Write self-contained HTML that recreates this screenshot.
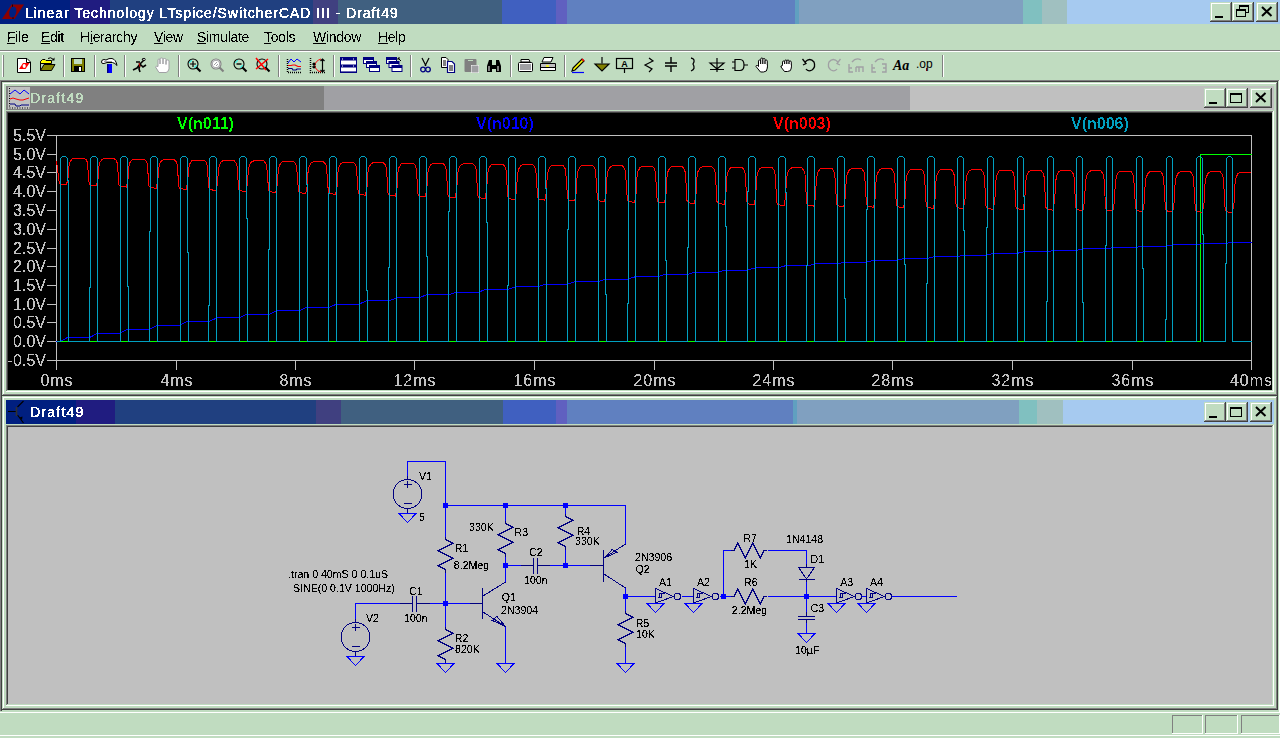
<!DOCTYPE html>
<html><head><meta charset="utf-8"><style>
html,body{margin:0;padding:0;width:1280px;height:738px;overflow:hidden;background:#C0DCC0;}
body>div,body>span,body>svg{position:absolute;}
span{font-family:"Liberation Sans",sans-serif;white-space:pre;line-height:1;filter:url(#crisp);}
svg text{font-family:"Liberation Sans",sans-serif;}
</style></head><body>
<svg width="0" height="0" style="position:absolute"><filter id="crisp" x="0" y="0" width="100%" height="100%"><feComponentTransfer><feFuncA type="discrete" tableValues="0 0 0 1 1 1 1"/></feComponentTransfer></filter><filter id="crispb" x="0" y="0" width="100%" height="100%"><feComponentTransfer><feFuncA type="discrete" tableValues="0 0 0 0 0 0 1 1 1 1"/></feComponentTransfer></filter><filter id="crispm" x="0" y="0" width="100%" height="100%"><feComponentTransfer><feFuncA type="discrete" tableValues="0 0 0 0 0 1 1 1 1 1"/></feComponentTransfer></filter></svg>
<div style="left:0px;top:0px;width:70px;height:24px;background:#001F80;"></div>
<div style="left:70px;top:0px;width:40px;height:24px;background:#201C80;"></div>
<div style="left:110px;top:0px;width:203px;height:24px;background:#204080;"></div>
<div style="left:313px;top:0px;width:25px;height:24px;background:#404080;"></div>
<div style="left:338px;top:0px;width:164px;height:24px;background:#406080;"></div>
<div style="left:502px;top:0px;width:54px;height:24px;background:#4060C0;"></div>
<div style="left:556px;top:0px;width:11px;height:24px;background:#6060C0;"></div>
<div style="left:567px;top:0px;width:228px;height:24px;background:#6080C0;"></div>
<div style="left:795px;top:0px;width:4px;height:24px;background:#60A0C0;"></div>
<div style="left:799px;top:0px;width:224px;height:24px;background:#80A0C0;"></div>
<div style="left:1023px;top:0px;width:19px;height:24px;background:#80C0C0;"></div>
<div style="left:1042px;top:0px;width:25px;height:24px;background:#A0C0C0;"></div>
<div style="left:1067px;top:0px;width:213px;height:24px;background:#A6CAF0;"></div>
<svg style="left:0;top:0" width="26" height="24" viewBox="0 0 26 24"><path fill="#8C0000" fill-rule="evenodd" d="M2,19 L11.5,4.5 H24 L14.5,19 Z M13,6.5 C15.5,6.5 16.8,8.5 16.4,11 C16,14 14.5,17.5 12.5,17.5 C10,17.5 8.8,15.5 9.2,13 C9.6,10 11,6.5 13,6.5 Z"/><path d="M12.5,4.5 V6.8 M13,17.2 V19" stroke="#200000" stroke-width="1"/></svg>
<span style="left:25px;top:6px;font-size:14px;color:#fff;font-weight:400;letter-spacing:0.96px;-webkit-text-stroke:0.3px #fff;filter:url(#crispm)">Linear Technology LTspice/SwitcherCAD III - Draft49</span>
<div style="left:1210px;top:2px;width:22px;height:20px;background:#C0DCC0;"></div>
<div style="left:1210px;top:2px;width:22px;height:1px;background:#C0DCC0;"></div>
<div style="left:1210px;top:2px;width:1px;height:20px;background:#C0DCC0;"></div>
<div style="left:1211px;top:3px;width:20px;height:1px;background:#FFFFFF;"></div>
<div style="left:1211px;top:3px;width:1px;height:18px;background:#FFFFFF;"></div>
<div style="left:1210px;top:21px;width:22px;height:1px;background:#404040;"></div>
<div style="left:1231px;top:2px;width:1px;height:20px;background:#404040;"></div>
<div style="left:1211px;top:20px;width:20px;height:1px;background:#808080;"></div>
<div style="left:1230px;top:3px;width:1px;height:18px;background:#808080;"></div>
<div style="left:1215px;top:16px;width:8px;height:2px;background:#000;"></div>
<div style="left:1232px;top:2px;width:22px;height:20px;background:#C0DCC0;"></div>
<div style="left:1232px;top:2px;width:22px;height:1px;background:#C0DCC0;"></div>
<div style="left:1232px;top:2px;width:1px;height:20px;background:#C0DCC0;"></div>
<div style="left:1233px;top:3px;width:20px;height:1px;background:#FFFFFF;"></div>
<div style="left:1233px;top:3px;width:1px;height:18px;background:#FFFFFF;"></div>
<div style="left:1232px;top:21px;width:22px;height:1px;background:#404040;"></div>
<div style="left:1253px;top:2px;width:1px;height:20px;background:#404040;"></div>
<div style="left:1233px;top:20px;width:20px;height:1px;background:#808080;"></div>
<div style="left:1252px;top:3px;width:1px;height:18px;background:#808080;"></div>
<div style="left:1239px;top:5px;width:10px;height:8px;background:transparent;box-sizing:border-box;border:1px solid #000;border-top-width:2px"></div>
<div style="left:1236px;top:9px;width:10px;height:8px;background:#C0DCC0;box-sizing:border-box;border:1px solid #000;border-top-width:2px"></div>
<div style="left:1256px;top:2px;width:22px;height:20px;background:#C0DCC0;"></div>
<div style="left:1256px;top:2px;width:22px;height:1px;background:#C0DCC0;"></div>
<div style="left:1256px;top:2px;width:1px;height:20px;background:#C0DCC0;"></div>
<div style="left:1257px;top:3px;width:20px;height:1px;background:#FFFFFF;"></div>
<div style="left:1257px;top:3px;width:1px;height:18px;background:#FFFFFF;"></div>
<div style="left:1256px;top:21px;width:22px;height:1px;background:#404040;"></div>
<div style="left:1277px;top:2px;width:1px;height:20px;background:#404040;"></div>
<div style="left:1257px;top:20px;width:20px;height:1px;background:#808080;"></div>
<div style="left:1276px;top:3px;width:1px;height:18px;background:#808080;"></div>
<svg style="left:1261px;top:6px" width="12" height="11" viewBox="0 0 12 11"><path d="M1,1 L10.5,10 M10.5,1 L1,10" stroke="#000" stroke-width="2"/></svg>
<span style="left:7px;top:30px;font-size:14px;color:#000;font-weight:400;letter-spacing:-0.3px;filter:url(#crispm)"><u>F</u>ile</span>
<span style="left:41px;top:30px;font-size:14px;color:#000;font-weight:400;letter-spacing:-0.3px;filter:url(#crispm)"><u>E</u>dit</span>
<span style="left:80px;top:30px;font-size:14px;color:#000;font-weight:400;letter-spacing:-0.3px;filter:url(#crispm)">H<u>i</u>erarchy</span>
<span style="left:154px;top:30px;font-size:14px;color:#000;font-weight:400;letter-spacing:-0.3px;filter:url(#crispm)"><u>V</u>iew</span>
<span style="left:197px;top:30px;font-size:14px;color:#000;font-weight:400;letter-spacing:-0.3px;filter:url(#crispm)"><u>S</u>imulate</span>
<span style="left:264px;top:30px;font-size:14px;color:#000;font-weight:400;letter-spacing:-0.3px;filter:url(#crispm)"><u>T</u>ools</span>
<span style="left:313px;top:30px;font-size:14px;color:#000;font-weight:400;letter-spacing:-0.3px;filter:url(#crispm)"><u>W</u>indow</span>
<span style="left:378px;top:30px;font-size:14px;color:#000;font-weight:400;letter-spacing:-0.3px;filter:url(#crispm)"><u>H</u>elp</span>
<div style="left:0px;top:50px;width:1280px;height:1px;background:#808080;"></div>
<div style="left:0px;top:51px;width:1280px;height:1px;background:#FFFFFF;"></div>
<div style="left:2px;top:55px;width:1px;height:22px;background:#FFFFFF;"></div>
<div style="left:3px;top:55px;width:1px;height:22px;background:#808080;"></div>
<div style="left:63px;top:55px;width:1px;height:22px;background:#808080;"></div>
<div style="left:64px;top:55px;width:1px;height:22px;background:#FFFFFF;"></div>
<div style="left:94px;top:55px;width:1px;height:22px;background:#808080;"></div>
<div style="left:95px;top:55px;width:1px;height:22px;background:#FFFFFF;"></div>
<div style="left:124px;top:55px;width:1px;height:22px;background:#808080;"></div>
<div style="left:125px;top:55px;width:1px;height:22px;background:#FFFFFF;"></div>
<div style="left:178px;top:55px;width:1px;height:22px;background:#808080;"></div>
<div style="left:179px;top:55px;width:1px;height:22px;background:#FFFFFF;"></div>
<div style="left:278px;top:55px;width:1px;height:22px;background:#808080;"></div>
<div style="left:279px;top:55px;width:1px;height:22px;background:#FFFFFF;"></div>
<div style="left:333px;top:55px;width:1px;height:22px;background:#808080;"></div>
<div style="left:334px;top:55px;width:1px;height:22px;background:#FFFFFF;"></div>
<div style="left:410px;top:55px;width:1px;height:22px;background:#808080;"></div>
<div style="left:411px;top:55px;width:1px;height:22px;background:#FFFFFF;"></div>
<div style="left:510px;top:55px;width:1px;height:22px;background:#808080;"></div>
<div style="left:511px;top:55px;width:1px;height:22px;background:#FFFFFF;"></div>
<div style="left:564px;top:55px;width:1px;height:22px;background:#808080;"></div>
<div style="left:565px;top:55px;width:1px;height:22px;background:#FFFFFF;"></div>
<div style="left:942px;top:55px;width:1px;height:22px;background:#808080;"></div>
<div style="left:943px;top:55px;width:1px;height:22px;background:#FFFFFF;"></div>
<svg style="left:0;top:52px" width="950" height="28" viewBox="0 52 950 28">
<g transform="translate(17,58)"><path d="M0.5,0.5 H10 L13.5,4 V14.5 H0.5 Z" fill="#fff" stroke="#000"/><path d="M9.5,0.5 V4.5 H13.5" fill="none" stroke="#000"/><path d="M2,11 L6,5 L12.5,5 L8.5,11 Z" fill="#f00"/><ellipse cx="7.2" cy="8" rx="1.6" ry="2" fill="#fff"/></g>
<g transform="translate(40,57)"><path d="M0.5,4.5 L2.5,2.5 H5 L6,3.5 H11.5 V6.5 H0.5 Z" fill="#ff0" stroke="#000"/><path d="M0.5,4.5 V13.5 H11.5 L15,7.5 H4 L0.5,13.5" fill="#808000" stroke="#000"/><path d="M8,1.5 Q10.5,-0.5 13.5,2.5" fill="none" stroke="#000"/><path d="M11.5,3.5 H14.5 V0.5 Z" fill="#000"/></g>
<g transform="translate(71,58)"><rect x="0.5" y="0.5" width="13" height="13" fill="#808000" stroke="#000"/><rect x="3" y="1" width="8" height="5" fill="#C0DCC0"/><rect x="3" y="8" width="8" height="6" fill="#000"/><rect x="8" y="9" width="2" height="4" fill="#fff"/></g>
<g transform="translate(101,58)"><path d="M0.5,4 Q0.5,1.5 3,1.5 L5,2 Q8,0 11,0.5 Q15,1.5 16,7.5 Q14,5 11.5,4.5 H6 L3,5.5 Q0.5,6 0.5,4 Z" fill="#fff" stroke="#000" stroke-width="1"/><path d="M3,3.5 H11" stroke="#a0a0a4"/><rect x="6" y="6" width="5" height="9" fill="#0000FF"/><rect x="6" y="6" width="1.5" height="9" fill="#000080"/></g>
<g transform="translate(131,58)"><path d="M2,12 L6,10 L9,6 L13,2 M13,2 L11,1 M9,6 L8,11 L9,14 M9,6 L12,9 L15,7 M5,4 L9,4" fill="none" stroke="#000" stroke-width="1.6"/><path d="M8,5 L9,9" stroke="#c00" stroke-width="1"/><circle cx="13" cy="1.5" r="1.2" fill="#fff" stroke="#000"/></g>
<g transform="translate(155,58)"><path d="M4,14.5 L0.5,9 Q1,7.5 3,8.5 V2 Q3,1 4,1 Q5,1 5,2 V6 V1 Q5,0 6.5,0 Q8,0 8,1 V6 V1.5 Q8,0.5 9.5,0.5 Q11,0.5 11,1.5 V6.5 V3 Q11,2 12.5,2 Q14,2 14,3 V11 Q13,14.5 11,14.5 Z" fill="#fff" stroke="#a0a0a4"/></g>
<g transform="translate(187,58)"><circle cx="6" cy="6" r="5" fill="none" stroke="#000" stroke-width="1.1"/><path d="M9.5,9.5 L13.5,13.5" stroke="#000" stroke-width="2.2"/><path d="M2.5,5 Q3,3 5,2.5 M9.5,7 Q9,9 7,9.5" stroke="#0ff" fill="none"/><path d="M3,6 H9 M6,3 V9" stroke="#000" stroke-width="1.2"/></g>
<g transform="translate(210,58)"><circle cx="6" cy="6" r="5" fill="#fff" stroke="#808080" stroke-width="1.1"/><path d="M9.5,9.5 L13.5,13.5" stroke="#808080" stroke-width="2.2"/><circle cx="6" cy="6" r="3.8" fill="none" stroke="#a0a0a4"/><path d="M4,7 L7,4 M6,8 L8,6" stroke="#a0a0a4"/></g>
<g transform="translate(233,58)"><circle cx="6" cy="6" r="5" fill="none" stroke="#000" stroke-width="1.1"/><path d="M9.5,9.5 L13.5,13.5" stroke="#000" stroke-width="2.2"/><path d="M2.5,5 Q3,3 5,2.5 M9.5,7 Q9,9 7,9.5" stroke="#0ff" fill="none"/><path d="M3.5,6 H8.5" stroke="#000" stroke-width="1.4"/></g>
<g transform="translate(256,58)"><circle cx="6" cy="6" r="5" fill="none" stroke="#000" stroke-width="1.1"/><path d="M9.5,9.5 L13.5,13.5" stroke="#000" stroke-width="2.2"/><path d="M2.5,5 Q3,3 5,2.5 M9.5,7 Q9,9 7,9.5" stroke="#0ff" fill="none"/><path d="M0,0 L10,12 M12,1 L0,11" stroke="#f00" stroke-width="1.5"/></g>
<g transform="translate(286,58)"><path d="M1.5,1 V14.5 H16" fill="none" stroke="#000" stroke-dasharray="1,1" stroke-width="1.5"/><path d="M2,5 L5,1 L8,4 L11,1 L15,4" fill="none" stroke="#00f"/><path d="M2,7.5 H5 L7,7 H9 L12,8.5 H15" fill="none" stroke="#f00" stroke-width="1.2"/><path d="M2,10.5 H6 L7,12 H10 L11,11 H15" fill="none" stroke="#000080" stroke-width="1.2"/></g>
<g transform="translate(309,58)"><path d="M1.5,0 V14.5 H16" fill="none" stroke="#000" stroke-dasharray="1,1" stroke-width="1.5"/><path d="M12,1 Q6,3 6,7.5 Q6,12 12,14" fill="none" stroke="#f00"/><path d="M13.5,1 V14 M11.5,3 L13.5,1 L15.5,3 M11.5,12 L13.5,14 L15.5,12 M5,5 V10 M3.5,6.5 L5,5 L6.5,6.5 M3.5,8.5 L5,10 L6.5,8.5" fill="none" stroke="#000" stroke-width="1.2"/></g>
<g transform="translate(340,57)"><rect x="0.5" y="0.5" width="16" height="15" fill="#fff" stroke="#000080" stroke-width="1"/><rect x="0.5" y="0.5" width="16" height="3" fill="#000080"/><rect x="0.5" y="7.5" width="16" height="3" fill="#000080"/><path d="M1,15 H16" stroke="#000080" stroke-width="1.2"/><rect x="2" y="1.5" width="1" height="1" fill="#fff"/><rect x="13" y="1.5" width="1" height="1" fill="#fff"/><rect x="2" y="8.5" width="1" height="1" fill="#fff"/><rect x="13" y="8.5" width="1" height="1" fill="#fff"/></g>
<g transform="translate(363,57)"><rect x="0.5" y="0.5" width="10" height="6" fill="#fff" stroke="#000080" stroke-width="1"/><rect x="0.5" y="0.5" width="10" height="2.5" fill="#000080"/><rect x="3.5" y="4.5" width="10" height="6" fill="#fff" stroke="#000080" stroke-width="1"/><rect x="3.5" y="4.5" width="10" height="2.5" fill="#000080"/><rect x="6.5" y="8.5" width="10" height="6" fill="#fff" stroke="#000080" stroke-width="1"/><rect x="6.5" y="8.5" width="10" height="2.5" fill="#000080"/></g>
<g transform="translate(386,57)"><rect x="0.5" y="0.5" width="10" height="6" fill="#fff" stroke="#000080" stroke-width="1"/><rect x="0.5" y="0.5" width="10" height="2.5" fill="#000080"/><rect x="3" y="4.5" width="10" height="6" fill="#fff" stroke="#000080" stroke-width="1"/><rect x="3" y="4.5" width="10" height="2.5" fill="#000080"/><rect x="6" y="8.5" width="10" height="6" fill="#fff" stroke="#000080" stroke-width="1"/><rect x="6" y="8.5" width="10" height="2.5" fill="#000080"/><path d="M12,1 L15,4 M12,1 H14 M12,1 V3" stroke="#000" fill="none"/></g>
<g transform="translate(420,58)"><path d="M2,0 L6,8 M9,0 L5,8" stroke="#000" stroke-width="1.2"/><circle cx="3" cy="11.5" r="2.3" fill="none" stroke="#000080" stroke-width="1.3"/><circle cx="8" cy="11.5" r="2.3" fill="none" stroke="#000080" stroke-width="1.3"/></g>
<g transform="translate(441,57)"><path d="M0.5,0.5 H5 L7,2.5 V10.5 H0.5 Z" fill="#fff" stroke="#000"/><path d="M2,4 H5 M2,6 H5 M2,8 H5" stroke="#000"/><path d="M6.5,4.5 H11 L13.5,7 V15.5 H6.5 Z" fill="#fff" stroke="#000080" stroke-width="1.2"/><path d="M8,9 H12 M8,11 H12 M8,13 H12" stroke="#000"/></g>
<g transform="translate(464,58)"><rect x="0.5" y="1" width="12" height="13" rx="1" fill="#808080"/><rect x="7" y="7" width="8" height="8" fill="#fff"/><rect x="7.5" y="7.5" width="7" height="7" fill="#a0a0a4"/><path d="M4,2.5 H9" stroke="#C0DCC0"/></g>
<g transform="translate(486,58)"><path d="M1,14 V8 L3,2 H6 V14 Z M10,14 V2 H13 L15,8 V14 Z M6,7 H10 V11 H6 Z" fill="#000"/><path d="M3,8 V13 M12,8 V13" stroke="#fff"/></g>
<g transform="translate(518,58)"><path d="M3,1.5 H11 L12,4 H3 Z" fill="#fff" stroke="#000"/><rect x="0.5" y="4.5" width="14" height="9" rx="1" fill="#fff" stroke="#000"/><rect x="2" y="6" width="11" height="6" fill="#a0a0a4"/></g>
<g transform="translate(540,57)"><path d="M4,0.5 H13 L11,5 H2 Z" fill="#fff" stroke="#000"/><path d="M0.5,6.5 H15.5 V13.5 H0.5 Z" fill="#C0C0C0" stroke="#000"/><path d="M1,10.5 H15" stroke="#000"/><path d="M6,9 H9" stroke="#ff0" stroke-width="1.5"/><rect x="1" y="11" width="14" height="2" fill="#fff"/></g>
<g transform="translate(570,57)"><path d="M3,11 L12,2 L14,4 L5,13 L2,14 Z" fill="#ff0" stroke="#000" stroke-width="1.2"/><path d="M12,2 L14,4" stroke="#f00" stroke-width="1.5"/><path d="M2,15.5 H14" stroke="#00f" stroke-width="1.2"/></g>
<g transform="translate(594,57)"><path d="M8,0 V6.5" stroke="#000" stroke-width="1.2"/><path d="M1,7 H15 L8,14 Z" fill="#808000" stroke="#000" stroke-width="1.2"/></g>
<g transform="translate(616,58)"><rect x="0.5" y="0.5" width="16" height="10" fill="#C0DCC0" stroke="#000" stroke-width="1.2"/><path d="M8.5,11 V15" stroke="#000" stroke-width="1.2"/><text x="8.5" y="9" font-size="9" font-weight="700" text-anchor="middle" fill="#000">A</text></g>
<g transform="translate(643,57)"><path d="M6,1 L10,4 L2,8 L9,12 L6,15" fill="none" stroke="#000" stroke-width="1.2"/></g>
<g transform="translate(664,57)"><path d="M7,0 V6 M7,9 V15 M1,6 H13 M1,9 H13" stroke="#000" stroke-width="1.4"/></g>
<g transform="translate(688,57)"><path d="M3,1 Q8,2 5,7 Q8,12 3,14" fill="none" stroke="#000" stroke-width="1.3"/></g>
<g transform="translate(709,57)"><path d="M1,6 H15 L8,12 Z M1,12.5 H15 M8,1 V15" fill="none" stroke="#000" stroke-width="1.2"/></g>
<g transform="translate(732,58)"><path d="M3,1.5 H8 Q12,1.5 12,7 Q12,12.5 8,12.5 H3 Z" fill="none" stroke="#000" stroke-width="1.2"/><path d="M0,4 H3 M0,10 H3 M12,7 H16" stroke="#000" stroke-width="1.2"/></g>
<g transform="translate(755,57)"><rect x="3.5" y="3" width="2.2" height="8" rx="1.1" fill="#fff" stroke="#000"/><rect x="5.7" y="1" width="2.2" height="9" rx="1.1" fill="#fff" stroke="#000"/><rect x="7.9" y="1.5" width="2.2" height="9" rx="1.1" fill="#fff" stroke="#000"/><rect x="10.1" y="3" width="2.2" height="8" rx="1.1" fill="#fff" stroke="#000"/><path d="M3.5,7.5 H12.3 V11 Q12.3,15 8.5,15 H5.5 L1,9.5 Q1,8 2.5,8.5 L3.5,9.5 Z" fill="#fff" stroke="#000"/><rect x="4" y="7" width="7.8" height="3" fill="#fff"/></g>
<g transform="translate(779,57)"><rect x="3.5" y="4" width="2.2" height="6" rx="1.1" fill="#fff" stroke="#000"/><rect x="5.7" y="3" width="2.2" height="7" rx="1.1" fill="#fff" stroke="#000"/><rect x="7.9" y="3" width="2.2" height="7" rx="1.1" fill="#fff" stroke="#000"/><rect x="10.1" y="4" width="2.2" height="6" rx="1.1" fill="#fff" stroke="#000"/><path d="M3.5,7.5 H12.3 V11 Q12.3,14.5 8.5,14.5 H5.5 L2,10 Q1.5,8.5 3,9 Z" fill="#fff" stroke="#000"/><rect x="4" y="7" width="7.8" height="3" fill="#fff"/></g>
<g transform="translate(802,58)"><path d="M3,4 Q8,-1 12,4 Q14,9 10,12 Q6,14 4,11" fill="none" stroke="#000" stroke-width="1.3"/><path d="M0.5,1 L4,5.5 L1,7" fill="none" stroke="#000" stroke-width="1.3"/></g>
<g transform="translate(826,58)"><path d="M12,4 Q7,-1 3,4 Q1,9 5,12 Q9,14 11,11" fill="none" stroke="#a0a0a4" stroke-width="1.3"/><path d="M14.5,1 L11,5.5 L14,7" fill="none" stroke="#a0a0a4" stroke-width="1.3"/></g>
<g transform="translate(848,57)"><path d="M1,7 V15 H5 M1,11 H4 M8,10 V15 M8,10 H15 V15 M11,10 V15 M4,5 Q8,0 13,3" fill="none" stroke="#a0a0a4" stroke-width="1.4"/></g>
<g transform="translate(871,57)"><path d="M1,7 V15 H5 M1,11 H4 M11,7 H15 V15 H11 M12,11 H15 M4,5 Q8,0 13,3" fill="none" stroke="#a0a0a4" stroke-width="1.4"/></g>
<g transform="translate(893,57)"><text x="0" y="13" style="font-family:Liberation Serif" font-style="italic" font-weight="700" font-size="14" fill="#000">Aa</text></g>
<g transform="translate(916,57)"><text x="0" y="11" font-weight="400" font-size="12" fill="#000">.op</text><path d="M10.5,11 V14" stroke="#800000"/></g>
</svg>
<div style="left:0px;top:80px;width:1280px;height:1px;background:#808080;"></div>
<div style="left:0px;top:81px;width:1280px;height:1px;background:#404040;"></div>
<div style="left:0px;top:80px;width:1px;height:632px;background:#808080;"></div>
<div style="left:1px;top:81px;width:1px;height:630px;background:#404040;"></div>
<div style="left:0px;top:711px;width:1280px;height:1px;background:#C0DCC0;"></div>
<div style="left:0px;top:712px;width:1280px;height:1px;background:#FFFFFF;"></div>
<div style="left:1278px;top:81px;width:1px;height:631px;background:#C0DCC0;"></div>
<div style="left:1279px;top:80px;width:1px;height:633px;background:#FFFFFF;"></div>
<div style="left:2px;top:82px;width:1276px;height:314px;background:#C0DCC0;"></div>
<div style="left:2px;top:82px;width:1276px;height:1px;background:#C0DCC0;"></div>
<div style="left:2px;top:82px;width:1px;height:314px;background:#C0DCC0;"></div>
<div style="left:3px;top:83px;width:1274px;height:1px;background:#FFFFFF;"></div>
<div style="left:3px;top:83px;width:1px;height:312px;background:#FFFFFF;"></div>
<div style="left:2px;top:395px;width:1276px;height:1px;background:#404040;"></div>
<div style="left:1277px;top:82px;width:1px;height:314px;background:#404040;"></div>
<div style="left:3px;top:394px;width:1274px;height:1px;background:#808080;"></div>
<div style="left:1276px;top:83px;width:1px;height:312px;background:#808080;"></div>
<div style="left:6px;top:86px;width:318px;height:24px;background:#808080;"></div>
<div style="left:324px;top:86px;width:586px;height:24px;background:#A0A0A4;"></div>
<div style="left:910px;top:86px;width:364px;height:24px;background:#C0C0C0;"></div>
<span style="left:30px;top:91px;font-size:14px;color:#C0DCC0;font-weight:400;letter-spacing:1.25px;-webkit-text-stroke:0.3px #C0DCC0;filter:url(#crispm)">Draft49</span>
<div style="left:1204px;top:88px;width:22px;height:20px;background:#C0DCC0;"></div>
<div style="left:1204px;top:88px;width:22px;height:1px;background:#C0DCC0;"></div>
<div style="left:1204px;top:88px;width:1px;height:20px;background:#C0DCC0;"></div>
<div style="left:1205px;top:89px;width:20px;height:1px;background:#FFFFFF;"></div>
<div style="left:1205px;top:89px;width:1px;height:18px;background:#FFFFFF;"></div>
<div style="left:1204px;top:107px;width:22px;height:1px;background:#404040;"></div>
<div style="left:1225px;top:88px;width:1px;height:20px;background:#404040;"></div>
<div style="left:1205px;top:106px;width:20px;height:1px;background:#808080;"></div>
<div style="left:1224px;top:89px;width:1px;height:18px;background:#808080;"></div>
<div style="left:1209px;top:102px;width:8px;height:2px;background:#000;"></div>
<div style="left:1226px;top:88px;width:22px;height:20px;background:#C0DCC0;"></div>
<div style="left:1226px;top:88px;width:22px;height:1px;background:#C0DCC0;"></div>
<div style="left:1226px;top:88px;width:1px;height:20px;background:#C0DCC0;"></div>
<div style="left:1227px;top:89px;width:20px;height:1px;background:#FFFFFF;"></div>
<div style="left:1227px;top:89px;width:1px;height:18px;background:#FFFFFF;"></div>
<div style="left:1226px;top:107px;width:22px;height:1px;background:#404040;"></div>
<div style="left:1247px;top:88px;width:1px;height:20px;background:#404040;"></div>
<div style="left:1227px;top:106px;width:20px;height:1px;background:#808080;"></div>
<div style="left:1246px;top:89px;width:1px;height:18px;background:#808080;"></div>
<div style="left:1230px;top:93px;width:12px;height:10px;background:transparent;box-sizing:border-box;border:1px solid #000;border-top-width:2px"></div>
<div style="left:1250px;top:88px;width:22px;height:20px;background:#C0DCC0;"></div>
<div style="left:1250px;top:88px;width:22px;height:1px;background:#C0DCC0;"></div>
<div style="left:1250px;top:88px;width:1px;height:20px;background:#C0DCC0;"></div>
<div style="left:1251px;top:89px;width:20px;height:1px;background:#FFFFFF;"></div>
<div style="left:1251px;top:89px;width:1px;height:18px;background:#FFFFFF;"></div>
<div style="left:1250px;top:107px;width:22px;height:1px;background:#404040;"></div>
<div style="left:1271px;top:88px;width:1px;height:20px;background:#404040;"></div>
<div style="left:1251px;top:106px;width:20px;height:1px;background:#808080;"></div>
<div style="left:1270px;top:89px;width:1px;height:18px;background:#808080;"></div>
<svg style="left:1255px;top:92px" width="12" height="11" viewBox="0 0 12 11"><path d="M1,1 L10.5,10 M10.5,1 L1,10" stroke="#000" stroke-width="2"/></svg>
<div style="left:6px;top:111px;width:1268px;height:1px;background:#808080;"></div>
<div style="left:6px;top:111px;width:1px;height:281px;background:#808080;"></div>
<div style="left:7px;top:112px;width:1266px;height:1px;background:#404040;"></div>
<div style="left:7px;top:112px;width:1px;height:279px;background:#404040;"></div>
<div style="left:6px;top:391px;width:1268px;height:1px;background:#FFFFFF;"></div>
<div style="left:1273px;top:111px;width:1px;height:281px;background:#FFFFFF;"></div>
<div style="left:7px;top:390px;width:1266px;height:1px;background:#C0DCC0;"></div>
<div style="left:1272px;top:112px;width:1px;height:279px;background:#C0DCC0;"></div>
<div style="left:8px;top:113px;width:1264px;height:277px;background:#000;"></div>
<svg style="left:6px;top:86px" width="26" height="24"><rect x="2" y="1" width="22" height="22" fill="#C0C0C0"/><path d="M3.5,2 V22 H24" fill="none" stroke="#000" stroke-dasharray="1,1.5"/><path d="M4,8 L9,4 L14,8 L18,4 L23,8" fill="none" stroke="#0000ff"/><path d="M4,13 L7,12 L10,13 L14,14 L17,14 L20,13 L23,12" fill="none" stroke="#f00"/><path d="M4,18 H9 L10,20 H14 L15,19 H23" fill="none" stroke="#000080"/></svg>
<svg style="left:8px;top:113px" width="1264" height="277" viewBox="8 113 1264 277">
<rect x="56.5" y="135.5" width="1195" height="225" fill="none" stroke="#C0C0C0" stroke-width="1" shape-rendering="crispEdges"/>
<line x1="47" y1="135.5" x2="56" y2="135.5" stroke="#C0C0C0" shape-rendering="crispEdges"/>
<text x="46" y="141" text-anchor="end" font-size="16" fill="#C0C0C0" filter="url(#crisp)">5.5V</text>
<line x1="47" y1="154.5" x2="56" y2="154.5" stroke="#C0C0C0" shape-rendering="crispEdges"/>
<text x="46" y="160" text-anchor="end" font-size="16" fill="#C0C0C0" filter="url(#crisp)">5.0V</text>
<line x1="47" y1="172.5" x2="56" y2="172.5" stroke="#C0C0C0" shape-rendering="crispEdges"/>
<text x="46" y="178" text-anchor="end" font-size="16" fill="#C0C0C0" filter="url(#crisp)">4.5V</text>
<line x1="47" y1="191.5" x2="56" y2="191.5" stroke="#C0C0C0" shape-rendering="crispEdges"/>
<text x="46" y="197" text-anchor="end" font-size="16" fill="#C0C0C0" filter="url(#crisp)">4.0V</text>
<line x1="47" y1="210.5" x2="56" y2="210.5" stroke="#C0C0C0" shape-rendering="crispEdges"/>
<text x="46" y="216" text-anchor="end" font-size="16" fill="#C0C0C0" filter="url(#crisp)">3.5V</text>
<line x1="47" y1="229.5" x2="56" y2="229.5" stroke="#C0C0C0" shape-rendering="crispEdges"/>
<text x="46" y="235" text-anchor="end" font-size="16" fill="#C0C0C0" filter="url(#crisp)">3.0V</text>
<line x1="47" y1="248.5" x2="56" y2="248.5" stroke="#C0C0C0" shape-rendering="crispEdges"/>
<text x="46" y="254" text-anchor="end" font-size="16" fill="#C0C0C0" filter="url(#crisp)">2.5V</text>
<line x1="47" y1="266.5" x2="56" y2="266.5" stroke="#C0C0C0" shape-rendering="crispEdges"/>
<text x="46" y="272" text-anchor="end" font-size="16" fill="#C0C0C0" filter="url(#crisp)">2.0V</text>
<line x1="47" y1="285.5" x2="56" y2="285.5" stroke="#C0C0C0" shape-rendering="crispEdges"/>
<text x="46" y="291" text-anchor="end" font-size="16" fill="#C0C0C0" filter="url(#crisp)">1.5V</text>
<line x1="47" y1="304.5" x2="56" y2="304.5" stroke="#C0C0C0" shape-rendering="crispEdges"/>
<text x="46" y="310" text-anchor="end" font-size="16" fill="#C0C0C0" filter="url(#crisp)">1.0V</text>
<line x1="47" y1="322.5" x2="56" y2="322.5" stroke="#C0C0C0" shape-rendering="crispEdges"/>
<text x="46" y="328" text-anchor="end" font-size="16" fill="#C0C0C0" filter="url(#crisp)">0.5V</text>
<line x1="47" y1="341.5" x2="56" y2="341.5" stroke="#C0C0C0" shape-rendering="crispEdges"/>
<text x="46" y="347" text-anchor="end" font-size="16" fill="#C0C0C0" filter="url(#crisp)">0.0V</text>
<line x1="47" y1="360.5" x2="56" y2="360.5" stroke="#C0C0C0" shape-rendering="crispEdges"/>
<text x="46" y="366" text-anchor="end" font-size="16" fill="#C0C0C0" filter="url(#crisp)">-0.5V</text>
<line x1="56.5" y1="360" x2="56.5" y2="370" stroke="#C0C0C0" shape-rendering="crispEdges"/>
<text x="57" y="386" text-anchor="middle" font-size="16" letter-spacing="1" fill="#C0C0C0" filter="url(#crisp)">0ms</text>
<line x1="176.5" y1="360" x2="176.5" y2="370" stroke="#C0C0C0" shape-rendering="crispEdges"/>
<text x="177" y="386" text-anchor="middle" font-size="16" letter-spacing="1" fill="#C0C0C0" filter="url(#crisp)">4ms</text>
<line x1="295.5" y1="360" x2="295.5" y2="370" stroke="#C0C0C0" shape-rendering="crispEdges"/>
<text x="296" y="386" text-anchor="middle" font-size="16" letter-spacing="1" fill="#C0C0C0" filter="url(#crisp)">8ms</text>
<line x1="414.5" y1="360" x2="414.5" y2="370" stroke="#C0C0C0" shape-rendering="crispEdges"/>
<text x="415" y="386" text-anchor="middle" font-size="16" letter-spacing="1" fill="#C0C0C0" filter="url(#crisp)">12ms</text>
<line x1="534.5" y1="360" x2="534.5" y2="370" stroke="#C0C0C0" shape-rendering="crispEdges"/>
<text x="535" y="386" text-anchor="middle" font-size="16" letter-spacing="1" fill="#C0C0C0" filter="url(#crisp)">16ms</text>
<line x1="654.5" y1="360" x2="654.5" y2="370" stroke="#C0C0C0" shape-rendering="crispEdges"/>
<text x="655" y="386" text-anchor="middle" font-size="16" letter-spacing="1" fill="#C0C0C0" filter="url(#crisp)">20ms</text>
<line x1="773.5" y1="360" x2="773.5" y2="370" stroke="#C0C0C0" shape-rendering="crispEdges"/>
<text x="774" y="386" text-anchor="middle" font-size="16" letter-spacing="1" fill="#C0C0C0" filter="url(#crisp)">24ms</text>
<line x1="892.5" y1="360" x2="892.5" y2="370" stroke="#C0C0C0" shape-rendering="crispEdges"/>
<text x="893" y="386" text-anchor="middle" font-size="16" letter-spacing="1" fill="#C0C0C0" filter="url(#crisp)">28ms</text>
<line x1="1012.5" y1="360" x2="1012.5" y2="370" stroke="#C0C0C0" shape-rendering="crispEdges"/>
<text x="1013" y="386" text-anchor="middle" font-size="16" letter-spacing="1" fill="#C0C0C0" filter="url(#crisp)">32ms</text>
<line x1="1132.5" y1="360" x2="1132.5" y2="370" stroke="#C0C0C0" shape-rendering="crispEdges"/>
<text x="1133" y="386" text-anchor="middle" font-size="16" letter-spacing="1" fill="#C0C0C0" filter="url(#crisp)">36ms</text>
<line x1="1251.5" y1="360" x2="1251.5" y2="370" stroke="#C0C0C0" shape-rendering="crispEdges"/>
<text x="1273" y="386" text-anchor="end" font-size="16" letter-spacing="1" fill="#C0C0C0" filter="url(#crisp)">40ms</text>
<text x="177" y="129" font-size="16" fill="#00FF00" font-weight="700" filter="url(#crispb)">V(n011)</text>
<text x="476" y="129" font-size="16" fill="#0000FF" font-weight="700" filter="url(#crispb)">V(n010)</text>
<text x="773" y="129" font-size="16" fill="#FF0000" font-weight="700" filter="url(#crispb)">V(n003)</text>
<text x="1071" y="129" font-size="16" fill="#00A0C0" font-weight="700" filter="url(#crispb)">V(n006)</text>
<polyline points="56.00,341.75 1200.50,341.75 1200.50,154.50 1251.50,154.50" fill="none" stroke="#00FF00" stroke-width="1" shape-rendering="crispEdges"/>
<polyline points="56.00,341.75 60.00,341.75 67.47,337.43 89.90,337.43 97.37,333.24 119.80,333.24 127.26,329.18 149.69,329.18 157.16,325.25 179.59,325.25 187.06,321.44 209.48,321.44 216.95,317.76 239.38,317.76 246.85,314.18 269.27,314.18 276.74,310.72 299.17,310.72 306.64,307.36 329.07,307.36 336.54,304.11 358.96,304.11 366.43,300.96 388.86,300.96 396.33,297.91 418.75,297.91 426.22,294.95 448.65,294.95 456.12,292.09 478.55,292.09 486.01,289.31 508.44,289.31 515.91,286.63 538.34,286.63 545.81,284.02 568.23,284.02 575.70,281.50 598.13,281.50 605.60,279.05 628.03,279.05 635.49,276.68 657.92,276.68 665.39,274.39 687.82,274.39 695.29,272.16 717.71,272.16 725.18,270.01 747.61,270.01 755.08,267.92 777.51,267.92 784.97,265.90 807.40,265.90 814.87,263.94 837.30,263.94 844.77,262.04 867.19,262.04 874.66,260.20 897.09,260.20 904.56,258.42 926.98,258.42 934.45,256.69 956.88,256.69 964.35,255.02 986.78,255.02 994.25,253.40 1016.67,253.40 1024.14,251.83 1046.57,251.83 1054.04,250.31 1076.46,250.31 1083.93,248.84 1106.36,248.84 1113.83,247.41 1136.26,247.41 1143.72,246.03 1166.15,246.03 1173.62,244.69 1196.05,244.69 1203.52,243.39 1225.94,243.39 1233.41,242.13 1251.50,242.13" fill="none" stroke="#0000FF" stroke-width="1" shape-rendering="crispEdges"/>
<polyline points="56.50,161.25 59.20,182.32 60.30,183.91 63.00,184.29 66.50,184.66 68.17,177.75 68.87,166.58 69.97,161.80 72.17,158.87 74.27,158.08 84.30,158.08 86.40,160.02 87.50,162.80 87.70,166.97 88.40,173.64 89.10,183.64 90.20,185.03 92.90,185.58 96.40,185.86 98.07,178.77 98.77,167.31 99.87,162.40 102.07,159.39 104.17,158.57 114.20,158.58 116.30,160.57 117.40,163.41 117.60,167.68 118.30,174.51 119.00,184.75 120.10,186.17 122.80,186.74 126.30,187.02 127.96,179.75 128.66,168.01 129.76,162.98 131.96,159.90 134.06,159.06 144.09,159.07 146.19,161.10 147.29,164.01 147.49,168.37 148.19,175.35 148.89,185.83 149.99,187.28 152.69,187.86 156.19,188.15 157.86,180.72 158.56,168.70 159.66,163.55 161.86,160.40 163.96,159.55 173.99,159.55 176.09,161.63 177.19,164.60 177.39,169.05 178.09,176.18 178.79,186.87 179.89,188.36 182.59,188.95 186.09,189.25 187.76,181.65 188.46,169.37 189.56,164.11 191.76,160.90 193.86,160.02 203.88,160.02 205.98,162.14 207.08,165.17 207.28,169.71 207.98,176.98 208.68,187.89 209.78,189.40 212.48,190.01 215.98,190.31 217.65,182.56 218.35,170.03 219.45,164.66 221.65,161.38 223.75,160.48 233.78,160.48 235.88,162.64 236.98,165.73 237.18,170.36 237.88,177.76 238.58,188.87 239.68,190.42 242.38,191.03 245.88,191.34 247.55,183.44 248.25,170.67 249.35,165.19 251.55,161.85 253.65,160.94 263.67,160.94 265.77,163.14 266.87,166.28 267.07,170.99 267.77,178.53 268.47,189.83 269.57,191.40 272.27,192.03 275.77,192.34 277.44,184.30 278.14,171.29 279.24,165.72 281.44,162.31 283.54,161.39 293.57,161.39 295.67,163.62 296.77,166.81 296.97,171.60 297.67,179.27 298.37,190.76 299.47,192.36 302.17,193.00 305.67,193.32 307.34,185.13 308.04,171.90 309.14,166.23 311.34,162.77 313.44,161.82 323.47,161.82 325.57,164.10 326.67,167.34 326.87,172.20 327.57,179.99 328.27,191.67 329.37,193.29 332.07,193.94 335.57,194.26 337.24,185.94 337.94,172.50 339.04,166.74 341.24,163.22 343.34,162.26 353.36,162.26 355.46,164.56 356.56,167.85 356.76,172.79 357.46,180.69 358.16,192.54 359.26,194.19 361.96,194.85 365.46,195.18 367.13,186.73 367.83,173.08 368.93,167.23 371.13,163.65 373.23,162.68 383.26,162.68 385.36,165.02 386.46,168.36 386.66,173.36 387.36,181.38 388.06,193.39 389.16,195.06 391.86,195.73 395.36,196.06 397.03,187.49 397.73,173.65 398.83,167.71 401.03,164.09 403.13,163.10 413.15,163.10 415.25,165.46 416.35,168.85 416.55,173.92 417.25,182.04 417.95,194.22 419.05,195.91 421.75,196.59 425.25,196.93 426.92,188.24 427.62,174.20 428.72,168.18 430.92,164.51 433.02,163.50 443.05,163.50 445.15,165.90 446.25,169.33 446.45,174.47 447.15,182.69 447.85,195.02 448.95,196.74 451.65,197.42 455.15,197.76 456.82,188.96 457.52,174.74 458.62,168.65 460.82,164.92 462.92,163.91 472.95,163.91 475.05,166.33 476.15,169.80 476.35,175.00 477.05,183.32 477.75,195.80 478.85,197.54 481.55,198.23 485.05,198.58 486.71,189.67 487.41,175.27 488.51,169.10 490.71,165.33 492.81,164.30 502.84,164.30 504.94,166.76 506.04,170.26 506.24,175.52 506.94,183.94 507.64,196.56 508.74,198.31 511.44,199.02 514.94,199.37 516.61,190.35 517.31,175.78 518.41,169.54 520.61,165.73 522.71,164.69 532.74,164.69 534.84,167.17 535.94,170.71 536.14,176.03 536.84,184.54 537.54,197.30 538.64,199.07 541.34,199.78 544.84,200.13 546.51,191.01 547.21,176.29 548.31,169.98 550.51,166.12 552.61,165.07 562.63,165.07 564.73,167.57 565.83,171.15 566.03,176.53 566.73,185.12 567.43,198.01 568.53,199.80 571.23,200.52 574.73,200.87 576.40,191.66 577.10,176.78 578.20,170.40 580.40,166.50 582.50,165.44 592.53,165.44 594.63,167.97 595.73,171.59 595.93,177.01 596.63,185.69 597.33,198.70 598.43,200.51 601.13,201.23 604.63,201.60 606.30,192.29 607.00,177.26 608.10,170.82 610.30,166.88 612.40,165.81 622.43,165.81 624.53,168.36 625.63,172.01 625.83,177.48 626.53,186.24 627.23,199.38 628.33,201.20 631.03,201.93 634.53,202.30 636.19,192.90 636.89,177.73 637.99,171.23 640.19,167.25 642.29,166.17 652.32,166.17 654.42,168.74 655.52,172.43 655.72,177.95 656.42,186.78 657.12,200.03 658.22,201.87 660.92,202.61 664.42,202.97 666.09,193.50 666.79,178.19 667.89,171.62 670.09,167.61 672.19,166.52 682.22,166.52 684.32,169.12 685.42,172.83 685.62,178.40 686.32,187.30 687.02,200.66 688.12,202.52 690.82,203.26 694.32,203.63 695.99,194.07 696.69,178.63 697.79,172.02 699.99,167.97 702.09,166.87 712.11,166.87 714.21,169.49 715.31,173.23 715.51,178.84 716.21,187.82 716.91,201.28 718.01,203.15 720.71,203.90 724.21,204.27 725.88,194.64 726.58,179.07 727.68,172.40 729.88,168.32 731.98,167.21 742.01,167.21 744.11,169.85 745.21,173.62 745.41,179.27 746.11,188.31 746.81,201.88 747.91,203.76 750.61,204.52 754.11,204.89 755.78,195.18 756.48,179.50 757.58,172.77 759.78,168.67 761.88,167.54 771.91,167.54 774.01,170.20 775.11,174.00 775.31,179.69 776.01,188.80 776.71,202.46 777.81,204.36 780.51,205.12 784.01,205.50 785.67,195.72 786.37,179.91 787.47,173.14 789.67,169.00 791.77,167.87 801.80,167.87 803.90,170.55 805.00,174.37 805.20,180.10 805.90,189.27 806.60,203.03 807.70,204.94 810.40,205.70 813.90,206.08 815.57,196.23 816.27,180.32 817.37,173.50 819.57,169.33 821.67,168.20 831.70,168.20 833.80,170.89 834.90,174.73 835.10,180.50 835.80,189.73 836.50,203.57 837.60,205.50 840.30,206.27 843.80,206.65 845.47,196.73 846.17,180.72 847.27,173.85 849.47,169.66 851.57,168.51 861.59,168.51 863.69,171.22 864.79,175.09 864.99,180.89 865.69,190.18 866.39,204.11 867.49,206.04 870.19,206.81 873.69,207.20 875.36,197.22 876.06,181.11 877.16,174.20 879.36,169.98 881.46,168.83 891.49,168.83 893.59,171.55 894.69,175.44 894.89,181.28 895.59,190.62 896.29,204.62 897.39,206.57 900.09,207.35 903.59,207.74 905.26,197.70 905.96,181.48 907.06,174.54 909.26,170.29 911.36,169.13 921.38,169.13 923.48,171.87 924.58,175.78 924.78,181.65 925.48,191.04 926.18,205.13 927.28,207.08 929.98,207.86 933.48,208.26 935.15,198.16 935.85,181.86 936.95,174.87 939.15,170.60 941.25,169.43 951.28,169.43 953.38,172.19 954.48,176.12 954.68,182.02 955.38,191.46 956.08,205.61 957.18,207.58 959.88,208.37 963.38,208.76 965.05,198.61 965.75,182.22 966.85,175.19 969.05,170.90 971.15,169.73 981.18,169.73 983.28,172.49 984.38,176.45 984.58,182.37 985.28,191.86 985.98,206.09 987.08,208.06 989.78,208.85 993.28,209.25 994.95,199.05 995.65,182.57 996.75,175.51 998.95,171.19 1001.05,170.02 1011.07,170.02 1013.17,172.80 1014.27,176.77 1014.47,182.72 1015.17,192.25 1015.87,206.55 1016.97,208.53 1019.67,209.33 1023.17,209.72 1024.84,199.47 1025.54,182.92 1026.64,175.82 1028.84,171.48 1030.94,170.30 1040.97,170.30 1043.07,173.09 1044.17,177.08 1044.37,183.06 1045.07,192.64 1045.77,206.99 1046.87,208.99 1049.57,209.78 1053.07,210.18 1054.74,199.89 1055.44,183.25 1056.54,176.13 1058.74,171.77 1060.84,170.58 1070.86,170.58 1072.96,173.38 1074.06,177.39 1074.26,183.40 1074.96,193.01 1075.66,207.43 1076.76,209.43 1079.46,210.23 1082.96,210.63 1084.63,200.29 1085.33,183.58 1086.43,176.42 1088.63,172.05 1090.73,170.86 1100.76,170.86 1102.86,173.67 1103.96,177.69 1104.16,183.72 1104.86,193.37 1105.56,207.85 1106.66,209.86 1109.36,210.66 1112.86,211.06 1114.53,200.68 1115.23,183.91 1116.33,176.72 1118.53,172.32 1120.63,171.13 1130.66,171.13 1132.76,173.95 1133.86,177.99 1134.06,184.04 1134.76,193.73 1135.46,208.26 1136.56,210.27 1139.26,211.08 1142.76,211.49 1144.42,201.06 1145.12,184.22 1146.22,177.00 1148.42,172.59 1150.52,171.39 1160.55,171.39 1162.65,174.23 1163.75,178.28 1163.95,184.35 1164.65,194.07 1165.35,208.65 1166.45,210.68 1169.15,211.49 1172.65,211.89 1174.32,201.43 1175.02,184.53 1176.12,177.28 1178.32,172.86 1180.42,171.65 1190.45,171.65 1192.55,174.49 1193.65,178.56 1193.85,184.66 1194.55,194.41 1195.25,209.04 1196.35,211.07 1199.05,211.88 1202.55,212.29 1204.22,201.79 1204.92,184.83 1206.02,177.56 1208.22,173.12 1210.32,171.91 1220.34,171.91 1222.44,174.76 1223.54,178.84 1223.74,184.95 1224.44,194.74 1225.14,209.41 1226.24,211.45 1228.94,212.27 1232.44,212.68 1234.11,202.14 1234.81,185.12 1235.91,177.83 1238.11,173.37 1240.21,172.16 1251.50,172.12" fill="none" stroke="#FF0000" stroke-width="1" shape-rendering="crispEdges"/>
<polyline points="56.50,341.75 60.50,341.75 60.50,159.38 61.50,157.38 62.50,156.38 65.50,156.38 66.50,157.38 67.50,159.38 67.50,180.00 68.50,180.00 68.50,341.75 89.50,341.75 89.50,287.00 90.50,287.00 90.50,159.38 91.50,157.38 92.50,156.38 95.50,156.38 96.50,157.38 97.50,159.38 97.50,341.75 120.50,341.75 120.50,159.38 121.50,157.38 122.50,156.38 125.50,156.38 126.50,157.38 127.50,159.38 127.50,286.00 128.50,286.00 128.50,341.75 149.50,341.75 149.50,231.00 150.50,231.00 150.50,159.38 151.50,157.38 152.50,156.38 155.50,156.38 156.50,157.38 157.50,159.38 157.50,341.75 180.50,341.75 180.50,159.38 181.50,157.38 182.50,156.38 185.50,156.38 186.50,157.38 187.50,159.38 187.50,252.00 188.50,252.00 188.50,341.75 208.50,341.75 208.50,305.00 209.50,305.00 209.50,159.38 210.50,157.38 211.50,156.38 214.50,156.38 215.50,157.38 216.50,159.38 216.50,341.75 239.50,341.75 239.50,159.38 240.50,157.38 241.50,156.38 244.50,156.38 245.50,157.38 246.50,159.38 246.50,218.00 247.50,218.00 247.50,341.75 268.50,341.75 268.50,249.00 269.50,249.00 269.50,159.38 270.50,157.38 271.50,156.38 274.50,156.38 275.50,157.38 276.50,159.38 276.50,341.75 299.50,341.75 299.50,159.38 300.50,157.38 301.50,156.38 304.50,156.38 305.50,157.38 306.50,159.38 306.50,184.00 307.50,184.00 307.50,341.75 328.50,341.75 328.50,193.00 329.50,193.00 329.50,159.38 330.50,157.38 331.50,156.38 334.50,156.38 335.50,157.38 336.50,159.38 336.50,341.75 359.50,341.75 359.50,159.38 360.50,157.38 361.50,156.38 364.50,156.38 365.50,157.38 366.50,159.38 366.50,290.00 367.50,290.00 367.50,341.75 388.50,341.75 388.50,267.00 389.50,267.00 389.50,159.38 390.50,157.38 391.50,156.38 394.50,156.38 395.50,157.38 396.50,159.38 396.50,341.75 419.50,341.75 419.50,159.38 420.50,157.38 421.50,156.38 424.50,156.38 425.50,157.38 426.50,159.38 426.50,256.00 427.50,256.00 427.50,341.75 448.50,341.75 448.50,211.00 449.50,211.00 449.50,159.38 450.50,157.38 451.50,156.38 454.50,156.38 455.50,157.38 456.50,159.38 456.50,341.75 479.50,341.75 479.50,159.38 480.50,157.38 481.50,156.38 484.50,156.38 485.50,157.38 486.50,159.38 486.50,222.00 487.50,222.00 487.50,341.75 507.50,341.75 507.50,285.00 508.50,285.00 508.50,159.38 509.50,157.38 510.50,156.38 513.50,156.38 514.50,157.38 515.50,159.38 515.50,341.75 538.50,341.75 538.50,159.38 539.50,157.38 540.50,156.38 543.50,156.38 544.50,157.38 545.50,159.38 545.50,188.00 546.50,188.00 546.50,341.75 567.50,341.75 567.50,229.00 568.50,229.00 568.50,159.38 569.50,157.38 570.50,156.38 573.50,156.38 574.50,157.38 575.50,159.38 575.50,341.75 598.50,341.75 598.50,159.38 599.50,157.38 600.50,156.38 603.50,156.38 604.50,157.38 605.50,159.38 605.50,294.00 606.50,294.00 606.50,341.75 627.50,341.75 627.50,303.00 628.50,303.00 628.50,159.38 629.50,157.38 630.50,156.38 633.50,156.38 634.50,157.38 635.50,159.38 635.50,341.75 658.50,341.75 658.50,159.38 659.50,157.38 660.50,156.38 663.50,156.38 664.50,157.38 665.50,159.38 665.50,260.00 666.50,260.00 666.50,341.75 687.50,341.75 687.50,247.00 688.50,247.00 688.50,159.38 689.50,157.38 690.50,156.38 693.50,156.38 694.50,157.38 695.50,159.38 695.50,341.75 718.50,341.75 718.50,159.38 719.50,157.38 720.50,156.38 723.50,156.38 724.50,157.38 725.50,159.38 725.50,226.00 726.50,226.00 726.50,341.75 747.50,341.75 747.50,191.00 748.50,191.00 748.50,159.38 749.50,157.38 750.50,156.38 753.50,156.38 754.50,157.38 755.50,159.38 755.50,341.75 778.50,341.75 778.50,159.38 779.50,157.38 780.50,156.38 783.50,156.38 784.50,157.38 785.50,159.38 785.50,192.00 786.50,192.00 786.50,341.75 806.50,341.75 806.50,265.00 807.50,265.00 807.50,159.38 808.50,157.38 809.50,156.38 812.50,156.38 813.50,157.38 814.50,159.38 814.50,341.75 837.50,341.75 837.50,159.38 838.50,157.38 839.50,156.38 842.50,156.38 843.50,157.38 844.50,159.38 844.50,298.00 845.50,298.00 845.50,341.75 866.50,341.75 866.50,209.00 867.50,209.00 867.50,159.38 868.50,157.38 869.50,156.38 872.50,156.38 873.50,157.38 874.50,159.38 874.50,341.75 897.50,341.75 897.50,159.38 898.50,157.38 899.50,156.38 902.50,156.38 903.50,157.38 904.50,159.38 904.50,264.00 905.50,264.00 905.50,341.75 926.50,341.75 926.50,283.00 927.50,283.00 927.50,159.38 928.50,157.38 929.50,156.38 932.50,156.38 933.50,157.38 934.50,159.38 934.50,341.75 957.50,341.75 957.50,159.38 958.50,157.38 959.50,156.38 961.50,156.38 962.50,157.38 963.50,159.38 963.50,230.00 964.50,230.00 964.50,341.75 986.50,341.75 986.50,227.00 987.50,227.00 987.50,159.38 988.50,157.38 989.50,156.38 991.50,156.38 992.50,157.38 993.50,159.38 993.50,341.75 1017.50,341.75 1017.50,159.38 1018.50,157.38 1019.50,156.38 1021.50,156.38 1022.50,157.38 1023.50,159.38 1023.50,196.00 1024.50,196.00 1024.50,341.75 1046.50,341.75 1046.50,301.00 1047.50,301.00 1047.50,159.38 1048.50,157.38 1049.50,156.38 1051.50,156.38 1052.50,157.38 1053.50,159.38 1053.50,341.75 1076.50,341.75 1076.50,159.38 1077.50,157.38 1078.50,156.38 1080.50,156.38 1081.50,157.38 1082.50,159.38 1082.50,302.00 1083.50,302.00 1083.50,341.75 1105.50,341.75 1105.50,245.00 1106.50,245.00 1106.50,159.38 1107.50,157.38 1108.50,156.38 1110.50,156.38 1111.50,157.38 1112.50,159.38 1112.50,341.75 1136.50,341.75 1136.50,159.38 1137.50,157.38 1138.50,156.38 1140.50,156.38 1141.50,157.38 1142.50,159.38 1142.50,268.00 1143.50,268.00 1143.50,341.75 1165.50,341.75 1165.50,319.00 1166.50,319.00 1166.50,159.38 1167.50,157.38 1168.50,156.38 1170.50,156.38 1171.50,157.38 1172.50,159.38 1172.50,341.75 1196.50,341.75 1196.50,159.38 1197.50,157.38 1198.50,156.38 1200.50,156.38 1201.50,157.38 1202.50,159.38 1202.50,234.00 1203.50,234.00 1203.50,341.75 1225.50,341.75 1225.50,263.00 1226.50,263.00 1226.50,159.38 1227.50,157.38 1228.50,156.38 1230.50,156.38 1231.50,157.38 1232.50,159.38 1232.50,341.75 1251.50,341.75" fill="none" stroke="#00A0C0" stroke-width="1" shape-rendering="crispEdges"/>
</svg>
<div style="left:2px;top:396px;width:1276px;height:314px;background:#C0DCC0;"></div>
<div style="left:2px;top:396px;width:1276px;height:1px;background:#C0DCC0;"></div>
<div style="left:2px;top:396px;width:1px;height:314px;background:#C0DCC0;"></div>
<div style="left:3px;top:397px;width:1274px;height:1px;background:#FFFFFF;"></div>
<div style="left:3px;top:397px;width:1px;height:312px;background:#FFFFFF;"></div>
<div style="left:2px;top:709px;width:1276px;height:1px;background:#404040;"></div>
<div style="left:1277px;top:396px;width:1px;height:314px;background:#404040;"></div>
<div style="left:3px;top:708px;width:1274px;height:1px;background:#808080;"></div>
<div style="left:1276px;top:397px;width:1px;height:312px;background:#808080;"></div>
<div style="left:6px;top:400px;width:70px;height:24px;background:#001F80;"></div>
<div style="left:76px;top:400px;width:39px;height:24px;background:#201C80;"></div>
<div style="left:115px;top:400px;width:201px;height:24px;background:#204080;"></div>
<div style="left:316px;top:400px;width:25px;height:24px;background:#404080;"></div>
<div style="left:341px;top:400px;width:162px;height:24px;background:#406080;"></div>
<div style="left:503px;top:400px;width:53px;height:24px;background:#4060C0;"></div>
<div style="left:556px;top:400px;width:11px;height:24px;background:#6060C0;"></div>
<div style="left:567px;top:400px;width:226px;height:24px;background:#6080C0;"></div>
<div style="left:793px;top:400px;width:4px;height:24px;background:#60A0C0;"></div>
<div style="left:797px;top:400px;width:222px;height:24px;background:#80A0C0;"></div>
<div style="left:1019px;top:400px;width:18px;height:24px;background:#80C0C0;"></div>
<div style="left:1037px;top:400px;width:26px;height:24px;background:#A0C0C0;"></div>
<div style="left:1063px;top:400px;width:211px;height:24px;background:#A6CAF0;"></div>
<span style="left:30px;top:405px;font-size:14px;color:#fff;font-weight:400;letter-spacing:1.25px;-webkit-text-stroke:0.3px #fff;filter:url(#crispm)">Draft49</span>
<div style="left:1204px;top:402px;width:22px;height:20px;background:#C0DCC0;"></div>
<div style="left:1204px;top:402px;width:22px;height:1px;background:#C0DCC0;"></div>
<div style="left:1204px;top:402px;width:1px;height:20px;background:#C0DCC0;"></div>
<div style="left:1205px;top:403px;width:20px;height:1px;background:#FFFFFF;"></div>
<div style="left:1205px;top:403px;width:1px;height:18px;background:#FFFFFF;"></div>
<div style="left:1204px;top:421px;width:22px;height:1px;background:#404040;"></div>
<div style="left:1225px;top:402px;width:1px;height:20px;background:#404040;"></div>
<div style="left:1205px;top:420px;width:20px;height:1px;background:#808080;"></div>
<div style="left:1224px;top:403px;width:1px;height:18px;background:#808080;"></div>
<div style="left:1209px;top:416px;width:8px;height:2px;background:#000;"></div>
<div style="left:1226px;top:402px;width:22px;height:20px;background:#C0DCC0;"></div>
<div style="left:1226px;top:402px;width:22px;height:1px;background:#C0DCC0;"></div>
<div style="left:1226px;top:402px;width:1px;height:20px;background:#C0DCC0;"></div>
<div style="left:1227px;top:403px;width:20px;height:1px;background:#FFFFFF;"></div>
<div style="left:1227px;top:403px;width:1px;height:18px;background:#FFFFFF;"></div>
<div style="left:1226px;top:421px;width:22px;height:1px;background:#404040;"></div>
<div style="left:1247px;top:402px;width:1px;height:20px;background:#404040;"></div>
<div style="left:1227px;top:420px;width:20px;height:1px;background:#808080;"></div>
<div style="left:1246px;top:403px;width:1px;height:18px;background:#808080;"></div>
<div style="left:1230px;top:407px;width:12px;height:10px;background:transparent;box-sizing:border-box;border:1px solid #000;border-top-width:2px"></div>
<div style="left:1250px;top:402px;width:22px;height:20px;background:#C0DCC0;"></div>
<div style="left:1250px;top:402px;width:22px;height:1px;background:#C0DCC0;"></div>
<div style="left:1250px;top:402px;width:1px;height:20px;background:#C0DCC0;"></div>
<div style="left:1251px;top:403px;width:20px;height:1px;background:#FFFFFF;"></div>
<div style="left:1251px;top:403px;width:1px;height:18px;background:#FFFFFF;"></div>
<div style="left:1250px;top:421px;width:22px;height:1px;background:#404040;"></div>
<div style="left:1271px;top:402px;width:1px;height:20px;background:#404040;"></div>
<div style="left:1251px;top:420px;width:20px;height:1px;background:#808080;"></div>
<div style="left:1270px;top:403px;width:1px;height:18px;background:#808080;"></div>
<svg style="left:1255px;top:406px" width="12" height="11" viewBox="0 0 12 11"><path d="M1,1 L10.5,10 M10.5,1 L1,10" stroke="#000" stroke-width="2"/></svg>
<div style="left:6px;top:425px;width:1268px;height:1px;background:#808080;"></div>
<div style="left:6px;top:425px;width:1px;height:281px;background:#808080;"></div>
<div style="left:7px;top:426px;width:1266px;height:1px;background:#404040;"></div>
<div style="left:7px;top:426px;width:1px;height:279px;background:#404040;"></div>
<div style="left:6px;top:705px;width:1268px;height:1px;background:#FFFFFF;"></div>
<div style="left:1273px;top:425px;width:1px;height:281px;background:#FFFFFF;"></div>
<div style="left:7px;top:704px;width:1266px;height:1px;background:#C0DCC0;"></div>
<div style="left:1272px;top:426px;width:1px;height:279px;background:#C0DCC0;"></div>
<div style="left:8px;top:427px;width:1264px;height:277px;background:#C0C0C0;"></div>
<svg style="left:6px;top:400px" width="26" height="24"><path d="M2,11.5 H10.5 M17.5,1 L11.5,7 M11.5,15 L17.5,23" stroke="#000" stroke-width="1.2" fill="none"/><path d="M10.5,7 V16" stroke="#303030" stroke-width="1.6"/><path d="M13.5,17.5 L16.5,16.5 L16,20 Z" fill="#000"/></svg>
<svg style="left:8px;top:427px" width="1264" height="277" viewBox="8 427 1264 277">
<path d="M407.5,476 L407.5,461.5 L445.5,461.5 L445.5,536.5" fill="none" stroke="#0000FF" stroke-width="1" shape-rendering="crispEdges"/>
<path d="M445.5,505.5 L625.5,505.5 L625.5,544" fill="none" stroke="#0000FF" stroke-width="1" shape-rendering="crispEdges"/>
<path d="M505.5,505.5 L505.5,520.5" fill="none" stroke="#0000FF" stroke-width="1" shape-rendering="crispEdges"/>
<path d="M505.5,556.5 L505.5,582" fill="none" stroke="#0000FF" stroke-width="1" shape-rendering="crispEdges"/>
<path d="M505.5,565.5 L521,565.5" fill="none" stroke="#0000FF" stroke-width="1" shape-rendering="crispEdges"/>
<path d="M550,565.5 L590,565.5" fill="none" stroke="#0000FF" stroke-width="1" shape-rendering="crispEdges"/>
<path d="M565.5,505.5 L565.5,513.5" fill="none" stroke="#0000FF" stroke-width="1" shape-rendering="crispEdges"/>
<path d="M565.5,549.5 L565.5,565.5" fill="none" stroke="#0000FF" stroke-width="1" shape-rendering="crispEdges"/>
<path d="M625.5,588 L625.5,610.5" fill="none" stroke="#0000FF" stroke-width="1" shape-rendering="crispEdges"/>
<path d="M625.5,596.5 L655.5,596.5" fill="none" stroke="#0000FF" stroke-width="1" shape-rendering="crispEdges"/>
<path d="M445.5,572.5 L445.5,626.5" fill="none" stroke="#0000FF" stroke-width="1" shape-rendering="crispEdges"/>
<path d="M355.5,618.5 L355.5,603.5 L400,603.5" fill="none" stroke="#0000FF" stroke-width="1" shape-rendering="crispEdges"/>
<path d="M430,603.5 L470,603.5" fill="none" stroke="#0000FF" stroke-width="1" shape-rendering="crispEdges"/>
<path d="M505.5,626.5 L505.5,663.5" fill="none" stroke="#0000FF" stroke-width="1" shape-rendering="crispEdges"/>
<path d="M445.5,663 L445.5,663.5" fill="none" stroke="#0000FF" stroke-width="1" shape-rendering="crispEdges"/>
<path d="M625.5,647 L625.5,663.5" fill="none" stroke="#0000FF" stroke-width="1" shape-rendering="crispEdges"/>
<path d="M681.5,596.5 L693.5,596.5" fill="none" stroke="#0000FF" stroke-width="1" shape-rendering="crispEdges"/>
<path d="M719.5,596.5 L731,596.5" fill="none" stroke="#0000FF" stroke-width="1" shape-rendering="crispEdges"/>
<path d="M723.5,596.5 L723.5,550.5 L731,550.5" fill="none" stroke="#0000FF" stroke-width="1" shape-rendering="crispEdges"/>
<path d="M768,550.5 L806.5,550.5 L806.5,564" fill="none" stroke="#0000FF" stroke-width="1" shape-rendering="crispEdges"/>
<path d="M768,596.5 L836.5,596.5" fill="none" stroke="#0000FF" stroke-width="1" shape-rendering="crispEdges"/>
<path d="M806.5,582 L806.5,596.5" fill="none" stroke="#0000FF" stroke-width="1" shape-rendering="crispEdges"/>
<path d="M806.5,596.5 L806.5,612" fill="none" stroke="#0000FF" stroke-width="1" shape-rendering="crispEdges"/>
<path d="M806.5,623 L806.5,633.5" fill="none" stroke="#0000FF" stroke-width="1" shape-rendering="crispEdges"/>
<path d="M862,596.5 L866.5,596.5" fill="none" stroke="#0000FF" stroke-width="1" shape-rendering="crispEdges"/>
<path d="M892,596.5 L957,596.5" fill="none" stroke="#0000FF" stroke-width="1" shape-rendering="crispEdges"/>
<path d="M445.5,536.5 L445.5,539.5 L453.0,543.25 L438.0,550.75 L453.0,558.25 L438.0,565.75 L445.5,569.5 L445.5,572.5" fill="none" stroke="#000080" stroke-width="1" shape-rendering="crispEdges"/>
<path d="M445.5,626.5 L445.5,629.5 L453.0,633.25 L438.0,640.75 L453.0,648.25 L438.0,655.75 L445.5,659.5 L445.5,662.5" fill="none" stroke="#000080" stroke-width="1" shape-rendering="crispEdges"/>
<path d="M505.5,520.5 L505.5,523.5 L513.0,527.25 L498.0,534.75 L513.0,542.25 L498.0,549.75 L505.5,553.5 L505.5,556.5" fill="none" stroke="#000080" stroke-width="1" shape-rendering="crispEdges"/>
<path d="M565.5,513.5 L565.5,516.5 L573.0,520.25 L558.0,527.75 L573.0,535.25 L558.0,542.75 L565.5,546.5 L565.5,549.5" fill="none" stroke="#000080" stroke-width="1" shape-rendering="crispEdges"/>
<path d="M625.5,610.5 L625.5,613.5 L633.0,617.25 L618.0,624.75 L633.0,632.25 L618.0,639.75 L625.5,643.5 L625.5,646.5" fill="none" stroke="#000080" stroke-width="1" shape-rendering="crispEdges"/>
<path d="M731,550.5 L734,550.5 L737.75,543.0 L745.25,558.0 L752.75,543.0 L760.25,558.0 L764,550.5 L767,550.5" fill="none" stroke="#000080" stroke-width="1" shape-rendering="crispEdges"/>
<path d="M731,596.5 L734,596.5 L737.75,589.0 L745.25,604.0 L752.75,589.0 L760.25,604.0 L764,596.5 L767,596.5" fill="none" stroke="#000080" stroke-width="1" shape-rendering="crispEdges"/>
<path d="M412.5,596 V612 M416.5,596 V612 M400,603.5 H412.5 M416.5,603.5 H430" fill="none" stroke="#000080" stroke-width="1" shape-rendering="crispEdges"/>
<path d="M533.5,558 V574 M537.5,558 V574 M521,565.5 H533.5 M537.5,565.5 H550" fill="none" stroke="#000080" stroke-width="1" shape-rendering="crispEdges"/>
<path d="M798,616.5 H815 M798,619.5 H815 M806.5,612 V616.5 M806.5,619.5 V623" fill="none" stroke="#000080" stroke-width="1" shape-rendering="crispEdges"/>
<path d="M798.5,567.5 H814.5 L806.5,579 Z M798.5,579.5 H814.5 M806.5,564 V567.5 M806.5,579.5 V582" fill="none" stroke="#000080" stroke-width="1" shape-rendering="crispEdges"/>
<path d="M482.5,588 V619 M470,603.5 H482.5" fill="none" stroke="#000080" stroke-width="1" shape-rendering="crispEdges"/>
<path d="M483,596 L505.5,582 M483,612 L505.5,626.5" fill="none" stroke="#000080" stroke-width="1" shape-rendering="crispEdges"/>
<path d="M492.3,620.4 L496.7,616.3 L505.5,626.5 Z" fill="none" stroke="#000080" stroke-width="1" shape-rendering="crispEdges"/>
<path d="M603.5,550 V582 M590,565.5 H603.5" fill="none" stroke="#000080" stroke-width="1" shape-rendering="crispEdges"/>
<path d="M604,558 L625.5,544 M604,574 L625.5,588" fill="none" stroke="#000080" stroke-width="1" shape-rendering="crispEdges"/>
<path d="M604,558 L612.3,549.4 L617,552.3 Z" fill="none" stroke="#000080" stroke-width="1" shape-rendering="crispEdges"/>
<circle cx="407.5" cy="494" r="14.5" fill="none" stroke="#000080" stroke-width="1" shape-rendering="crispEdges"/>
<path d="M403.5,484.5 H411.5 M407.5,481 V488" fill="none" stroke="#000080" stroke-width="1" shape-rendering="crispEdges"/>
<path d="M403.5,503.5 H411.5" fill="none" stroke="#000080" stroke-width="1" shape-rendering="crispEdges"/>
<path d="M407.5,479.5 V476 M407.5,508.5 V513.5" fill="none" stroke="#000080" stroke-width="1" shape-rendering="crispEdges"/>
<path d="M399.0,513.5 H416.0 L407.5,522.5 Z" fill="none" stroke="#0000FF" stroke-width="1" shape-rendering="crispEdges"/>
<circle cx="355.5" cy="637" r="14.5" fill="none" stroke="#000080" stroke-width="1" shape-rendering="crispEdges"/>
<path d="M351.5,627.5 H359.5 M355.5,624 V631" fill="none" stroke="#000080" stroke-width="1" shape-rendering="crispEdges"/>
<path d="M351.5,646.5 H359.5" fill="none" stroke="#000080" stroke-width="1" shape-rendering="crispEdges"/>
<path d="M355.5,622.5 V619 M355.5,651.5 V656.5" fill="none" stroke="#000080" stroke-width="1" shape-rendering="crispEdges"/>
<path d="M347.0,656.5 H364.0 L355.5,665.5 Z" fill="none" stroke="#0000FF" stroke-width="1" shape-rendering="crispEdges"/>
<path d="M655.5,588.5 V603.5 M655.5,588.5 L673.5,596.5 L655.5,603 " fill="none" stroke="#000080" stroke-width="1" shape-rendering="crispEdges"/>
<circle cx="677.3" cy="596.5" r="3.3" fill="none" stroke="#000080" stroke-width="1" shape-rendering="crispEdges"/>
<path d="M657.5,597.5 H661.5 V593.5 H664.5 M659.5,597.5 V593.5 H661.5" fill="none" stroke="#000080" stroke-width="1" shape-rendering="crispEdges"/>
<path d="M647.0,603.5 H664.0 L655.5,612.5 Z" fill="none" stroke="#0000FF" stroke-width="1" shape-rendering="crispEdges"/>
<path d="M693.5,588.5 V603.5 M693.5,588.5 L711.5,596.5 L693.5,603 " fill="none" stroke="#000080" stroke-width="1" shape-rendering="crispEdges"/>
<circle cx="715.3" cy="596.5" r="3.3" fill="none" stroke="#000080" stroke-width="1" shape-rendering="crispEdges"/>
<path d="M695.5,597.5 H699.5 V593.5 H702.5 M697.5,597.5 V593.5 H699.5" fill="none" stroke="#000080" stroke-width="1" shape-rendering="crispEdges"/>
<path d="M685.0,603.5 H702.0 L693.5,612.5 Z" fill="none" stroke="#0000FF" stroke-width="1" shape-rendering="crispEdges"/>
<path d="M836.5,588.5 V603.5 M836.5,588.5 L854.5,596.5 L836.5,603 " fill="none" stroke="#000080" stroke-width="1" shape-rendering="crispEdges"/>
<circle cx="858.3" cy="596.5" r="3.3" fill="none" stroke="#000080" stroke-width="1" shape-rendering="crispEdges"/>
<path d="M838.5,597.5 H842.5 V593.5 H845.5 M840.5,597.5 V593.5 H842.5" fill="none" stroke="#000080" stroke-width="1" shape-rendering="crispEdges"/>
<path d="M828.0,603.5 H845.0 L836.5,612.5 Z" fill="none" stroke="#0000FF" stroke-width="1" shape-rendering="crispEdges"/>
<path d="M866.5,588.5 V603.5 M866.5,588.5 L884.5,596.5 L866.5,603 " fill="none" stroke="#000080" stroke-width="1" shape-rendering="crispEdges"/>
<circle cx="888.3" cy="596.5" r="3.3" fill="none" stroke="#000080" stroke-width="1" shape-rendering="crispEdges"/>
<path d="M868.5,597.5 H872.5 V593.5 H875.5 M870.5,597.5 V593.5 H872.5" fill="none" stroke="#000080" stroke-width="1" shape-rendering="crispEdges"/>
<path d="M858.0,603.5 H875.0 L866.5,612.5 Z" fill="none" stroke="#0000FF" stroke-width="1" shape-rendering="crispEdges"/>
<path d="M437.0,663.5 H454.0 L445.5,672.5 Z" fill="none" stroke="#0000FF" stroke-width="1" shape-rendering="crispEdges"/>
<path d="M497.0,663.5 H514.0 L505.5,672.5 Z" fill="none" stroke="#0000FF" stroke-width="1" shape-rendering="crispEdges"/>
<path d="M617.0,663.5 H634.0 L625.5,672.5 Z" fill="none" stroke="#0000FF" stroke-width="1" shape-rendering="crispEdges"/>
<path d="M798.0,633.5 H815.0 L806.5,642.5 Z" fill="none" stroke="#0000FF" stroke-width="1" shape-rendering="crispEdges"/>
<rect x="443.0" y="503.0" width="5" height="5" fill="#0000FF"/>
<rect x="503.0" y="503.0" width="5" height="5" fill="#0000FF"/>
<rect x="563.0" y="503.0" width="5" height="5" fill="#0000FF"/>
<rect x="503.0" y="563.0" width="5" height="5" fill="#0000FF"/>
<rect x="563.0" y="563.0" width="5" height="5" fill="#0000FF"/>
<rect x="443.0" y="601.0" width="5" height="5" fill="#0000FF"/>
<rect x="623.0" y="594.0" width="5" height="5" fill="#0000FF"/>
<rect x="721.0" y="594.0" width="5" height="5" fill="#0000FF"/>
<rect x="804.0" y="594.0" width="5" height="5" fill="#0000FF"/>
<text x="419" y="479.7" font-size="10.6" fill="#000" filter="url(#crisp)">V1</text>
<text x="419" y="521.4" font-size="10.6" fill="#000" filter="url(#crisp)">5</text>
<text x="288" y="577.8" font-size="10.6" fill="#000" filter="url(#crisp)">.tran 0 40mS 0 0.1uS</text>
<text x="293" y="591.8" font-size="10.6" fill="#000" filter="url(#crisp)">SINE(0 0.1V 1000Hz)</text>
<text x="409" y="594.7" font-size="10.6" fill="#000" filter="url(#crisp)">C1</text>
<text x="404" y="621.8" font-size="10.6" fill="#000" filter="url(#crisp)">100n</text>
<text x="366" y="622.2" font-size="10.6" fill="#000" filter="url(#crisp)">V2</text>
<text x="469" y="530.5" font-size="10.6" fill="#000" filter="url(#crisp)">330K</text>
<text x="514.5" y="536" font-size="10.6" fill="#000" filter="url(#crisp)">R3</text>
<text x="454.7" y="551.6" font-size="10.6" fill="#000" filter="url(#crisp)">R1</text>
<text x="453.8" y="568.5" font-size="10.6" fill="#000" filter="url(#crisp)">8.2Meg</text>
<text x="529" y="556" font-size="10.6" fill="#000" filter="url(#crisp)">C2</text>
<text x="524" y="583.5" font-size="10.6" fill="#000" filter="url(#crisp)">100n</text>
<text x="501.7" y="600.5" font-size="10.6" fill="#000" filter="url(#crisp)">Q1</text>
<text x="501" y="613.5" font-size="10.6" fill="#000" filter="url(#crisp)">2N3904</text>
<text x="454.8" y="641.6" font-size="10.6" fill="#000" filter="url(#crisp)">R2</text>
<text x="455" y="652.5" font-size="10.6" fill="#000" filter="url(#crisp)">820K</text>
<text x="576.7" y="534.8" font-size="10.6" fill="#000" filter="url(#crisp)">R4</text>
<text x="575" y="545.4" font-size="10.6" fill="#000" filter="url(#crisp)">330K</text>
<text x="635" y="560.5" font-size="10.6" fill="#000" filter="url(#crisp)">2N3906</text>
<text x="635.5" y="573.2" font-size="10.6" fill="#000" filter="url(#crisp)">Q2</text>
<text x="659" y="585.7" font-size="10.6" fill="#000" filter="url(#crisp)">A1</text>
<text x="697" y="585.7" font-size="10.6" fill="#000" filter="url(#crisp)">A2</text>
<text x="840.2" y="585.7" font-size="10.6" fill="#000" filter="url(#crisp)">A3</text>
<text x="870" y="585.7" font-size="10.6" fill="#000" filter="url(#crisp)">A4</text>
<text x="635.7" y="626.7" font-size="10.6" fill="#000" filter="url(#crisp)">R5</text>
<text x="636" y="637.7" font-size="10.6" fill="#000" filter="url(#crisp)">10K</text>
<text x="743.4" y="541.9" font-size="10.6" fill="#000" filter="url(#crisp)">R7</text>
<text x="786" y="542.6" font-size="10.6" fill="#000" filter="url(#crisp)">1N4148</text>
<text x="744" y="568.4" font-size="10.6" fill="#000" filter="url(#crisp)">1K</text>
<text x="810.5" y="562.7" font-size="10.6" fill="#000" filter="url(#crisp)">D1</text>
<text x="744" y="586.3" font-size="10.6" fill="#000" filter="url(#crisp)">R6</text>
<text x="731.8" y="614" font-size="10.6" fill="#000" filter="url(#crisp)">2.2Meg</text>
<text x="810.5" y="611.5" font-size="10.6" fill="#000" filter="url(#crisp)">C3</text>
<text x="795" y="654" font-size="10.6" fill="#000" filter="url(#crisp)">10µF</text>
</svg>
<div style="left:1172px;top:715px;width:31px;height:1px;background:#808080;"></div>
<div style="left:1172px;top:715px;width:1px;height:19px;background:#808080;"></div>
<div style="left:1172px;top:733px;width:31px;height:1px;background:#FFFFFF;"></div>
<div style="left:1202px;top:715px;width:1px;height:19px;background:#FFFFFF;"></div>
<div style="left:1205px;top:715px;width:33px;height:1px;background:#808080;"></div>
<div style="left:1205px;top:715px;width:1px;height:19px;background:#808080;"></div>
<div style="left:1205px;top:733px;width:33px;height:1px;background:#FFFFFF;"></div>
<div style="left:1237px;top:715px;width:1px;height:19px;background:#FFFFFF;"></div>
<div style="left:1241px;top:715px;width:39px;height:1px;background:#808080;"></div>
<div style="left:1241px;top:715px;width:1px;height:19px;background:#808080;"></div>
<div style="left:1241px;top:733px;width:39px;height:1px;background:#FFFFFF;"></div>
<div style="left:1279px;top:715px;width:1px;height:19px;background:#FFFFFF;"></div>
<div style="left:0px;top:735px;width:1280px;height:1px;background:#FFFFFF;"></div>
</body></html>
